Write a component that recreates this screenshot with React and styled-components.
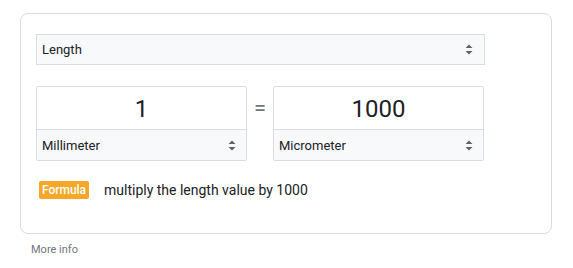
import React, { useState } from 'react';
import styled, { createGlobalStyle } from 'styled-components';

const GlobalStyle = createGlobalStyle`
  body {
    margin: 0;
    background: #fff;
    font-family: Roboto, Arial, sans-serif;
    color: #202124;
  }
`;

function Arrows() {
  return (
    <svg width="8" height="11" viewBox="0 0 8 11">
      <path d="M4 0.5 L7.5 4 L0.5 4 Z" fill="#5f6368" />
      <path d="M4 10.5 L7.5 7 L0.5 7 Z" fill="#5f6368" />
    </svg>
  );
}

function Converter() {
  const [from] = useState('1');
  const [to] = useState('1000');

  return (
    <>
      <Card>
        <CategorySelect>
          <span>Length</span>
          <Arrows />
        </CategorySelect>
        <Row>
          <UnitBox>
            <Value>{from}</Value>
            <UnitSelect>
              <span>Millimeter</span>
              <Arrows />
            </UnitSelect>
          </UnitBox>
          <Equals>=</Equals>
          <UnitBox>
            <Value>{to}</Value>
            <UnitSelect>
              <span>Micrometer</span>
              <Arrows />
            </UnitSelect>
          </UnitBox>
        </Row>
        <FormulaRow>
          <Badge>Formula</Badge>
          <span>multiply the length value by 1000</span>
        </FormulaRow>
      </Card>
      <MoreInfo href="#">More info</MoreInfo>
    </>
  );
}

export default function App() {
  return (
    <>
      <GlobalStyle />
      <Page>
        <Converter />
      </Page>
    </>
  );
}

const Page = styled.div`
  padding: 13px 0 0 20px;
`;

const Card = styled.div`
  width: 532px;
  height: 221px;
  box-sizing: border-box;
  border: 1px solid #dadce0;
  border-radius: 8px;
  padding: 20px 0 0 15px;
`;

const CategorySelect = styled.div`
  width: 449px;
  height: 31px;
  box-sizing: border-box;
  border: 1px solid #dadce0;
  background: #f8f9fa;
  display: flex;
  align-items: center;
  justify-content: space-between;
  padding: 0 11px 0 5px;
  font-size: 13px;
  color: #202124;
`;

const Row = styled.div`
  display: flex;
  align-items: flex-start;
  margin-top: 21px;
  width: 449px;
`;

const UnitBox = styled.div`
  width: 211px;
  box-sizing: border-box;
  border: 1px solid #dadce0;
  border-radius: 2px;
  display: flex;
  flex-direction: column;
`;

const Value = styled.div`
  height: 42px;
  display: flex;
  align-items: center;
  justify-content: center;
  font-size: 24px;
  color: #202124;
  padding-top: 1px;
  box-sizing: border-box;
`;

const UnitSelect = styled.div`
  height: 31px;
  box-sizing: border-box;
  border-top: 1px solid #dadce0;
  background: #f8f9fa;
  display: flex;
  align-items: center;
  justify-content: space-between;
  padding: 0 10px 0 5px;
  font-size: 13px;
  color: #202124;
`;

const Equals = styled.div`
  width: 26px;
  height: 43px;
  display: flex;
  align-items: center;
  justify-content: center;
  font-size: 22px;
  color: #70757a;
`;

const FormulaRow = styled.div`
  display: flex;
  align-items: center;
  margin-top: 20px;
  font-size: 14px;
  color: #202124;
  padding-left: 3px;
`;

const Badge = styled.span`
  display: inline-flex;
  align-items: center;
  justify-content: center;
  height: 18px;
  width: 50px;
  background: #f6a728;
  color: #fff;
  border-radius: 2px;
  font-size: 12px;
  font-weight: 500;
  margin-right: 15px;
`;

const MoreInfo = styled.a`
  display: block;
  margin: 9px 0 0 11px;
  font-size: 11px;
  color: #70757a;
  text-decoration: none;
`;
